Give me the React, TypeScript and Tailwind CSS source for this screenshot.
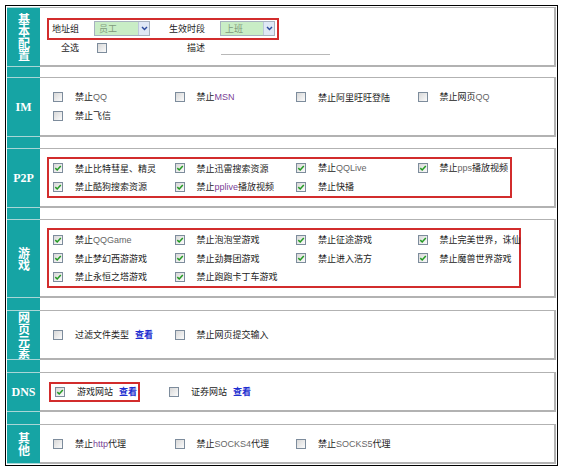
import React from "react";

const CJK = { fontFamily: '"Noto Sans CJK SC", "Liberation Sans", sans-serif' };

function Box({ checked }: { checked?: boolean }) {
  return (
    <span className="w-[10px] h-[10px] shrink-0 border border-[#7d8c9c] bg-linear-to-br from-[#d8d8d8] to-[#fbfbfb] flex items-center justify-center">
      {checked && (
        <svg width="8" height="8" viewBox="0 0 8 8">
          <path d="M1.3 4.1 L3.2 6 L6.8 1.9" fill="none" stroke="#239a23" strokeWidth="1.5" />
        </svg>
      )}
    </span>
  );
}

function En({ c, children }: { c?: string; children: React.ReactNode }) {
  return (
    <span className={c === "p" ? "text-[#7a3f96]" : "text-[#666]"} style={{ fontFamily: '"Liberation Sans", sans-serif' }}>
      {children}
    </span>
  );
}

function Link() {
  return <span className="ml-[6px] font-bold text-[#1e2fd0]">查看</span>;
}

function Item({ checked, children }: { checked?: boolean; children: React.ReactNode }) {
  return (
    <div className="flex items-center h-[18.5px]">
      <Box checked={checked} />
      <span className="ml-[12px] text-[9px] leading-none text-[#222] whitespace-nowrap">{children}</span>
    </div>
  );
}

function Label({ children, serif }: { children: React.ReactNode; serif?: boolean }) {
  return (
    <div className="bg-[#16a4a4] border-y border-[#a9d6d6] flex items-center justify-center text-white font-bold">
      {serif ? (
        <span className="text-[12px] leading-none" style={{ fontFamily: '"Liberation Serif", serif' }}>
          {children}
        </span>
      ) : (
        <span className="text-[12px] leading-[14px] [writing-mode:vertical-rl] [text-orientation:upright]">{children}</span>
      )}
    </div>
  );
}

function Content({ h, children }: { h: string; children: React.ReactNode }) {
  return (
    <div className={`${h} bg-white border-t border-r-2 border-b-2 border-[#b2b2b2] flex flex-col justify-center`}>
      {children}
    </div>
  );
}

function Gap({ h }: { h: string }) {
  return (
    <>
      <div className={`${h} bg-[#16a4a4]`} />
      <div className={`${h} bg-white`} />
    </>
  );
}

function Select({ text, w }: { text: string; w: string }) {
  return (
    <div className={`${w} h-[15px] flex border border-[#a7b2bf] bg-[#c9edc6]`}>
      <span className="flex-1 pl-[4px] text-[9px] leading-[13px] text-[#7f9a7c]">{text}</span>
      <span className="w-[11px] h-full bg-[#dfe8f5] border-l border-[#bcc8da] flex items-center justify-center">
        <svg width="7" height="5" viewBox="0 0 7 5">
          <path d="M1 1 L3.5 3.6 L6 1" fill="none" stroke="#2c4a9c" strokeWidth="1.4" />
        </svg>
      </span>
    </div>
  );
}

const COLS = "grid grid-cols-[121.5px_121.5px_121.5px_auto]";

export default function App() {
  return (
    <div className="w-[564px] h-[472px] bg-white pt-[5px] pl-[5px]" style={CJK}>
      <div className="w-[553px] border border-black p-px">
        <div className="grid grid-cols-[33px_1fr]">
          {/* 基本配置 */}
          <Label>基本配置</Label>
          <Content h="h-[60px]">
            <div className="pl-[7px] flex flex-col">
              <div className="w-[232px] h-[22px] border-2 border-[#d22c2c] flex items-center pl-[3px] text-[9px] text-[#222]">
                <span className="w-[42px]">地址组</span>
                <Select text="员工" w="w-[56px]" />
                <span className="ml-[19px] w-[51px]">生效时段</span>
                <Select text="上班" w="w-[55px]" />
              </div>
              <div className="h-[16px] flex items-center text-[9px] text-[#222]">
                <span className="ml-[14px] w-[36px]">全选</span>
                <Box />
                <span className="ml-[80px] w-[34px]">描述</span>
                <span className="w-[109px] h-[14px] border-b border-[#b8b8b8]" />
              </div>
            </div>
          </Content>
          <Gap h="h-[10px]" />

          {/* IM */}
          <Label serif>IM</Label>
          <Content h="h-[60px]">
            <div className={`pl-[13px] ${COLS}`}>
              <Item>禁止<En>QQ</En></Item>
              <Item>禁止<En c="p">MSN</En></Item>
              <Item>禁止阿里旺旺登陆</Item>
              <Item>禁止网页<En>QQ</En></Item>
              <Item>禁止飞信</Item>
            </div>
          </Content>
          <Gap h="h-[11px]" />

          {/* P2P */}
          <Label serif>P2P</Label>
          <Content h="h-[60px]">
            <div className={`ml-[7px] w-[465px] border-2 border-[#d22c2c] pl-[4px] ${COLS}`}>
              <Item checked>禁止比特彗星、精灵</Item>
              <Item checked>禁止迅雷搜索资源</Item>
              <Item checked>禁止<En>QQLive</En></Item>
              <Item checked>禁止<En>pps</En>播放视频</Item>
              <Item checked>禁止酷狗搜索资源</Item>
              <Item checked>禁止<En c="p">pplive</En>播放视频</Item>
              <Item checked>禁止快播</Item>
            </div>
          </Content>
          <Gap h="h-[11px]" />

          {/* 游戏 */}
          <Label>游戏</Label>
          <Content h="h-[79px]">
            <div className={`ml-[7px] w-[474px] border-2 border-[#d22c2c] pl-[4px] ${COLS}`}>
              <Item checked>禁止<En>QQGame</En></Item>
              <Item checked>禁止泡泡堂游戏</Item>
              <Item checked>禁止征途游戏</Item>
              <Item checked>禁止完美世界，诛仙</Item>
              <Item checked>禁止梦幻西游游戏</Item>
              <Item checked>禁止劲舞团游戏</Item>
              <Item checked>禁止进入浩方</Item>
              <Item checked>禁止魔兽世界游戏</Item>
              <Item checked>禁止永恒之塔游戏</Item>
              <Item checked>禁止跑跑卡丁车游戏</Item>
            </div>
          </Content>
          <Gap h="h-[12px]" />

          {/* 网页元素 */}
          <Label>网页元素</Label>
          <Content h="h-[50px]">
            <div className={`pl-[13px] ${COLS}`}>
              <Item>过滤文件类型<Link /></Item>
              <Item>禁止网页提交输入</Item>
            </div>
          </Content>
          <Gap h="h-[12px]" />

          {/* DNS */}
          <Label serif>DNS</Label>
          <Content h="h-[40px]">
            <div className="pl-[9px] flex items-center">
              <div className="w-[91px] h-[20px] border-2 border-[#d22c2c] pl-[4px] flex items-center">
                <Item checked>游戏网站<Link /></Item>
              </div>
              <div className="ml-[29px]">
                <Item>证券网站<Link /></Item>
              </div>
            </div>
          </Content>
          <Gap h="h-[12px]" />

          {/* 其他 */}
          <Label>其他</Label>
          <Content h="h-[40px]">
            <div className={`pl-[13px] ${COLS}`}>
              <Item>禁止<En c="p">http</En>代理</Item>
              <Item>禁止<En>SOCKS4</En>代理</Item>
              <Item>禁止<En>SOCKS5</En>代理</Item>
            </div>
          </Content>
        </div>
      </div>
    </div>
  );
}
